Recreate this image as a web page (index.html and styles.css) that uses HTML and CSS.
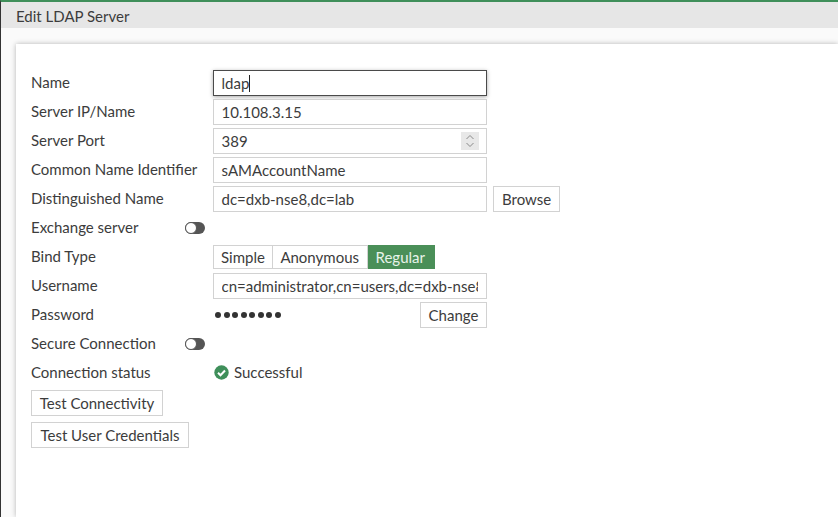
FILE: index.html
```html
<!DOCTYPE html>
<html lang="en">
<head>
<meta charset="utf-8">
<title>Edit LDAP Server</title>
<link rel="stylesheet" href="styles.css">
</head>
<body>
<div class="app">
  <header class="title">Edit LDAP Server</header>
  <main class="card">
    <div class="row"><label class="lbl">Name</label><div class="field focus">ldap<span class="caret"></span></div></div>
    <div class="row"><label class="lbl">Server IP/Name</label><div class="field">10.108.3.15</div></div>
    <div class="row"><label class="lbl">Server Port</label><div class="field spaced">389
      <span class="spin"><svg width="10" height="14" viewBox="0 0 10 14"><path d="M1.500 5 5 1.500 8.500 5M1.500 9 5 12.500 8.500 9" fill="none" stroke="#8a8a8a" stroke-width="1"/></svg></span></div></div>
    <div class="row"><label class="lbl">Common Name Identifier</label><div class="field">sAMAccountName</div></div>
    <div class="row"><label class="lbl">Distinguished Name</label><div class="field">dc=dxb-nse8,dc=lab</div><button class="btn browse">Browse</button></div>
    <div class="row"><label class="lbl tog-lbl">Exchange server</label><span class="toggle"><span class="knob"></span></span></div>
    <div class="row"><label class="lbl">Bind Type</label>
      <div class="seg"><span class="opt">Simple</span><span class="opt">Anonymous</span><span class="opt on">Regular</span></div></div>
    <div class="row"><label class="lbl">Username</label><input class="field input" type="text" value="cn=administrator,cn=users,dc=dxb-nse8,dc=lab"></div>
    <div class="row"><label class="lbl">Password</label><div class="pw"><span class="dots"><i></i><i></i><i></i><i></i><i></i><i></i><i></i><i></i></span><button class="btn change">Change</button></div></div>
    <div class="row"><label class="lbl tog-lbl">Secure Connection</label><span class="toggle"><span class="knob"></span></span></div>
    <div class="row"><label class="lbl">Connection status</label>
      <div class="status"><svg width="15" height="15" viewBox="0 0 15 15"><circle cx="7.500" cy="7.500" r="7.200" fill="#3f8f5a"/><path d="M4 7.800 6.500 10.300 11 5.500" fill="none" stroke="#fff" stroke-width="2"/></svg><span>Successful</span></div></div>
    <div class="actions">
      <button class="btn test-conn">Test Connectivity</button>
      <button class="btn test-user">Test User Credentials</button>
    </div>
  </main>
</div>
</body>
</html>
```
FILE: styles.css
```css
* { box-sizing: border-box; }
html, body { margin: 0; height: 100%; overflow: hidden; }
body { font-family: Lato, "Open Sans", sans-serif; font-size: 15px; color: #3c3c3c; background: #fff; }
.app { height: 517px; border-top: 2px solid #3f8f5a; border-left: 1px solid #333; display: flex; flex-direction: column; background: #fafafa; }
.title { height: 26px; flex: none; background: #e6e6e6; padding: 0 0 0 15px; line-height: 29px; font-size: 15px; }
.card { flex: 1; margin: 16px 0 0 15px; padding: 26px 0 0 15px; background: #fff; box-shadow: 0 0 5px rgba(0,0,0,.28); display: flex; flex-direction: column; gap: 3px; }
.row { display: flex; align-items: center; height: 26px; }
.lbl { width: 182px; flex: none; position: relative; top: -1px; }
.tog-lbl { width: 154px; }
.field { width: 274px; height: 26px; border: 1px solid #d2d2d2; padding: 0 8px 0 7.500px; line-height: 25px; background: #fff; }
.focus { border: 1px solid #4a4a4a; box-shadow: 0 1px 4px rgba(0,0,0,.35); }
.caret { display: inline-block; width: 1px; height: 17px; background: #222; vertical-align: -3px; }
.spaced { display: flex; align-items: center; justify-content: space-between; }
.spin { width: 18px; height: 18px; background: #e8e8e8; display: flex; align-items: center; justify-content: center; margin-right: -1px; }
.input { font: inherit; color: inherit; outline: none; margin: 0; padding-bottom: 1px; }
.btn { font: inherit; color: inherit; height: 26px; padding: 0 8px; background: #fff; border: 1px solid #d2d2d2; line-height: 24px; }
.browse { margin-left: 6px; }
.change { width: 67px; padding: 0; }
.test-conn { width: 132px; padding: 0; }
.test-user { width: 158px; padding: 0; }
.toggle { width: 20px; height: 12px; border-radius: 6px; background: #555; position: relative; display: block; }
.knob { position: absolute; left: 0; top: 0; width: 12px; height: 12px; border-radius: 50%; background: #fff; border: 1px solid #555; }
.seg { display: flex; height: 24px; border: 1px solid #d2d2d2; }
.opt { padding: 0 7.500px 0 7px; line-height: 22px; border-right: 1px solid #d2d2d2; }
.opt.on { width: 67px; background: #4a8f58; color: #e8f3ea; border: 0; margin: -1px -1px -1px 0; line-height: 24px; padding: 0 0 0 8px; }
.pw { width: 274px; display: flex; justify-content: space-between; align-items: center; }
.dots { display: flex; gap: 2.500px; margin-left: 2px; }
.dots i { width: 6px; height: 6px; border-radius: 50%; background: #333; }
.status { display: flex; align-items: center; gap: 5px; margin-left: 1px; position: relative; top: -1px; }
.actions { display: flex; flex-direction: column; align-items: flex-start; gap: 6px; margin-top: 1px; }
```
